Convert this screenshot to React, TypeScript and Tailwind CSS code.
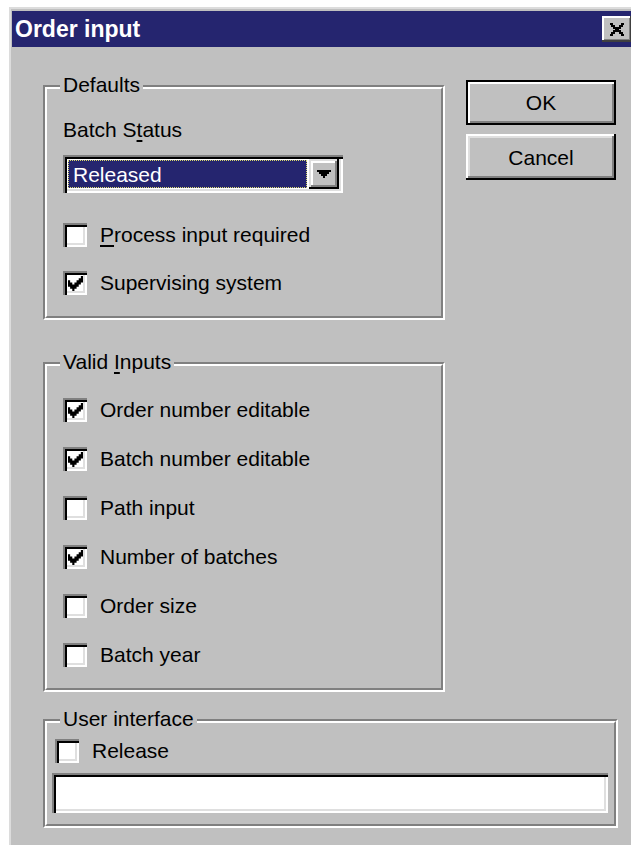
import React from "react";

// pixel glyphs, drawn on small grids and scaled up
const CHECK_PATH =
  "M6 0h1v1h-1zM5 1h2v1h-2zM0 2h1v1h-1zM4 2h3v1h-3zM0 3h2v1h-2zM3 3h3v1h-3zM0 4h5v1h-5zM1 5h3v1h-3zM2 6h1v1h-1z";
const CLOSE_PATH =
  "M0 0h2v1h-2zM6 0h2v1h-2zM1 1h2v1h-2zM5 1h2v1h-2zM2 2h4v1h-4zM3 3h2v1h-2zM2 4h4v1h-4zM1 5h2v1h-2zM5 5h2v1h-2zM0 6h2v1h-2zM6 6h2v1h-2z";
const ARROW_PATH = "M0 0h7v1h-7zM1 1h5v1h-5zM2 2h3v1h-3zM3 3h1v1h-1z";

const Checkbox = ({ checked, label }: { checked?: boolean; label: React.ReactNode }) => (
  <div className="flex h-6 items-center gap-[13px]">
    <span className="flex h-6 w-6 shrink-0 items-center justify-center bg-white shadow-[inset_2px_2px_#808080,inset_4px_4px_#000,inset_-2px_-2px_#fff,inset_-4px_-4px_#dfdfdf]">
      {checked && (
        <svg viewBox="0 0 7 7" className="ml-px mt-px h-[15px] w-[15px]">
          <path d={CHECK_PATH} fill="#000" />
        </svg>
      )}
    </span>
    <span className="leading-6">{label}</span>
  </div>
);

const Group = ({
  title,
  className,
  children,
}: {
  title: React.ReactNode;
  className: string;
  children: React.ReactNode;
}) => (
  <div
    className={`relative border-2 border-t-[#808080] border-l-[#808080] border-r-white border-b-white ${className}`}
  >
    <div className="h-full border-2 border-t-white border-l-white border-r-[#808080] border-b-[#808080]">
      {children}
    </div>
    <span className="absolute -top-[14px] left-[15px] bg-[#c0c0c0] px-[3px] leading-6">{title}</span>
  </div>
);

const Key = ({ children }: { children: React.ReactNode }) => (
  <span className="underline decoration-[1.5px] underline-offset-[3px]">{children}</span>
);

export default function App() {
  return (
    <div className="h-[845px] w-[631px] overflow-hidden bg-white pl-[9px] pt-[7px] font-['Liberation_Sans',Arial,sans-serif] text-[21px] text-black">
      <div className="h-[860px] w-[625px] border-l-2 border-t-2 border-[#dcdcdc] bg-[#c0c0c0] p-px">
        {/* title bar */}
        <div className="mt-px flex h-[36px] items-center justify-between bg-[#25256f] pl-[3px] pr-[1px]">
          <span className="text-[23px] font-bold leading-none text-white">Order input</span>
          <button className="flex h-[26px] w-[30px] items-center justify-center bg-[#c0c0c0] shadow-[inset_-2px_-2px_#404040,inset_2px_2px_#fff,inset_-3px_-3px_#808080]">
            <svg viewBox="0 0 8 7" className="h-[13px] w-[16px]" shapeRendering="crispEdges">
              <path d={CLOSE_PATH} fill="#000" />
            </svg>
          </button>
        </div>

        <div className="pl-[31px] pt-[33px]">
          <div className="flex items-start gap-[21px]">
            <Group title="Defaults" className="mt-[5px] h-[235px] w-[402px]">
              <div className="pl-[16px] pt-[29px]">
                <div className="h-6 leading-6">
                  Batch S<Key>t</Key>atus
                </div>
                <div className="mt-[13px] flex h-[38px] w-[280px] bg-white p-[4px] shadow-[inset_2px_2px_#808080,inset_4px_4px_#000,inset_-2px_-2px_#fff,inset_-4px_-4px_#dfdfdf]">
                  <div className="my-px ml-px mr-[2px] flex flex-1 items-center border border-dotted border-[#d8d870] bg-[#25256f] pl-[4px] leading-none text-white">
                    Released
                  </div>
                  <div className="flex w-[30px] items-center justify-center bg-[#c0c0c0] shadow-[inset_-2px_-2px_#000,inset_2px_2px_#dfdfdf,inset_-4px_-4px_#808080,inset_4px_4px_#fff]">
                    <svg viewBox="0 0 7 4" className="h-[8px] w-[14px]" shapeRendering="crispEdges">
                      <path d={ARROW_PATH} fill="#000" />
                    </svg>
                  </div>
                </div>
                <div className="mt-[30px]">
                  <Checkbox
                    label={
                      <>
                        <Key>P</Key>rocess input required
                      </>
                    }
                  />
                </div>
                <div className="mt-[24px]">
                  <Checkbox checked label="Supervising system" />
                </div>
              </div>
            </Group>

            <div className="flex flex-col gap-[9px]">
              <button className="flex h-[45px] w-[150px] items-center justify-center border-2 border-black bg-[#c0c0c0] leading-none shadow-[inset_2px_2px_#fff,inset_-2px_-2px_#808080]">
                OK
              </button>
              <button className="flex h-[46px] w-[150px] items-center justify-center bg-[#c0c0c0] leading-none shadow-[inset_-2px_-2px_#000,inset_2px_2px_#fff,inset_-4px_-4px_#808080,inset_4px_4px_#dfdfdf]">
                Cancel
              </button>
            </div>
          </div>

          <Group
            title={
              <>
                Valid <Key>I</Key>nputs
              </>
            }
            className="mt-[42px] h-[330px] w-[402px]"
          >
            <div className="flex flex-col gap-[25px] pl-[16px] pt-[32px]">
              <Checkbox checked label="Order number editable" />
              <Checkbox checked label="Batch number editable" />
              <Checkbox label="Path input" />
              <Checkbox checked label="Number of batches" />
              <Checkbox label="Order size" />
              <Checkbox label="Batch year" />
            </div>
          </Group>

          <Group title="User interface" className="mt-[27px] h-[109px] w-[575px]">
            <div className="pl-[5px] pt-[16px]">
              <div className="ml-[3px]">
                <Checkbox label="Release" />
              </div>
              <div className="mt-[10px] h-[40px] w-[556px] bg-white shadow-[inset_2px_2px_#808080,inset_4px_4px_#000,inset_-2px_-2px_#fff,inset_-4px_-4px_#dfdfdf]" />
            </div>
          </Group>
        </div>
      </div>
    </div>
  );
}
